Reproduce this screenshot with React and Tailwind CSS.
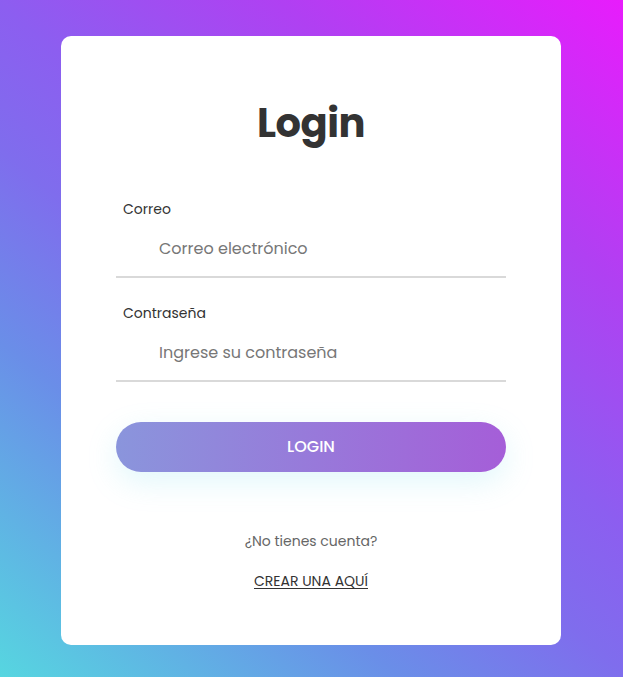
import React from "react";

const font = { fontFamily: "Poppins, Inter, 'Open Sans', sans-serif" };

const Field = ({ label, placeholder, type = "text", className = "" }) => (
  <div className={className}>
    <label className="block pl-[7px] text-[14px] font-normal leading-[21px] text-[#333]">
      {label}
    </label>
    <input
      type={type}
      placeholder={placeholder}
      className="block h-[58px] w-full border-b-2 border-[#d9d9d9] bg-transparent pl-[43px] text-[16px] text-[#333] outline-none placeholder:text-[#777]"
    />
  </div>
);

export default function App() {
  return (
    <div
      className="flex min-h-screen bg-[linear-gradient(40deg,#56d6e0_0%,#6a8ee8_28%,#7f6ded_44%,#8c5ef0_56%,#b040f2_76%,#e81cfc_100%)] pl-[61px] pt-[36px]"
      style={font}
    >
      <div className="h-[609px] w-[500px] rounded-[10px] bg-white px-[55px] pt-[63px]">
        {/* Titulo */}
        <h1 className="text-center text-[40px] font-bold leading-[48px] tracking-[-0.5px] text-[#333]">
          Login
        </h1>

        <Field label="Correo" placeholder="Correo electrónico" className="mt-[52px]" />
        <Field
          label="Contraseña"
          placeholder="Ingrese su contraseña"
          type="password"
          className="mt-[25px]"
        />

        <button className="mt-[40px] h-[50px] w-full rounded-full bg-[linear-gradient(to_right,#8a95dc,#a55ed8)] text-[16px] font-medium text-white shadow-[0_10px_30px_0_rgba(120,220,235,0.22)]">
          LOGIN
        </button>

        {/* Registro */}
        <p className="mt-[59px] text-center text-[14px] leading-[21px] text-[#666]">
          ¿No tienes cuenta?
        </p>
        <div className="mt-[17px] text-center">
          <a href="#" className="text-[14px] leading-[21px] text-[#333] underline underline-offset-2">
            CREAR UNA AQUÍ
          </a>
        </div>
      </div>
    </div>
  );
}
